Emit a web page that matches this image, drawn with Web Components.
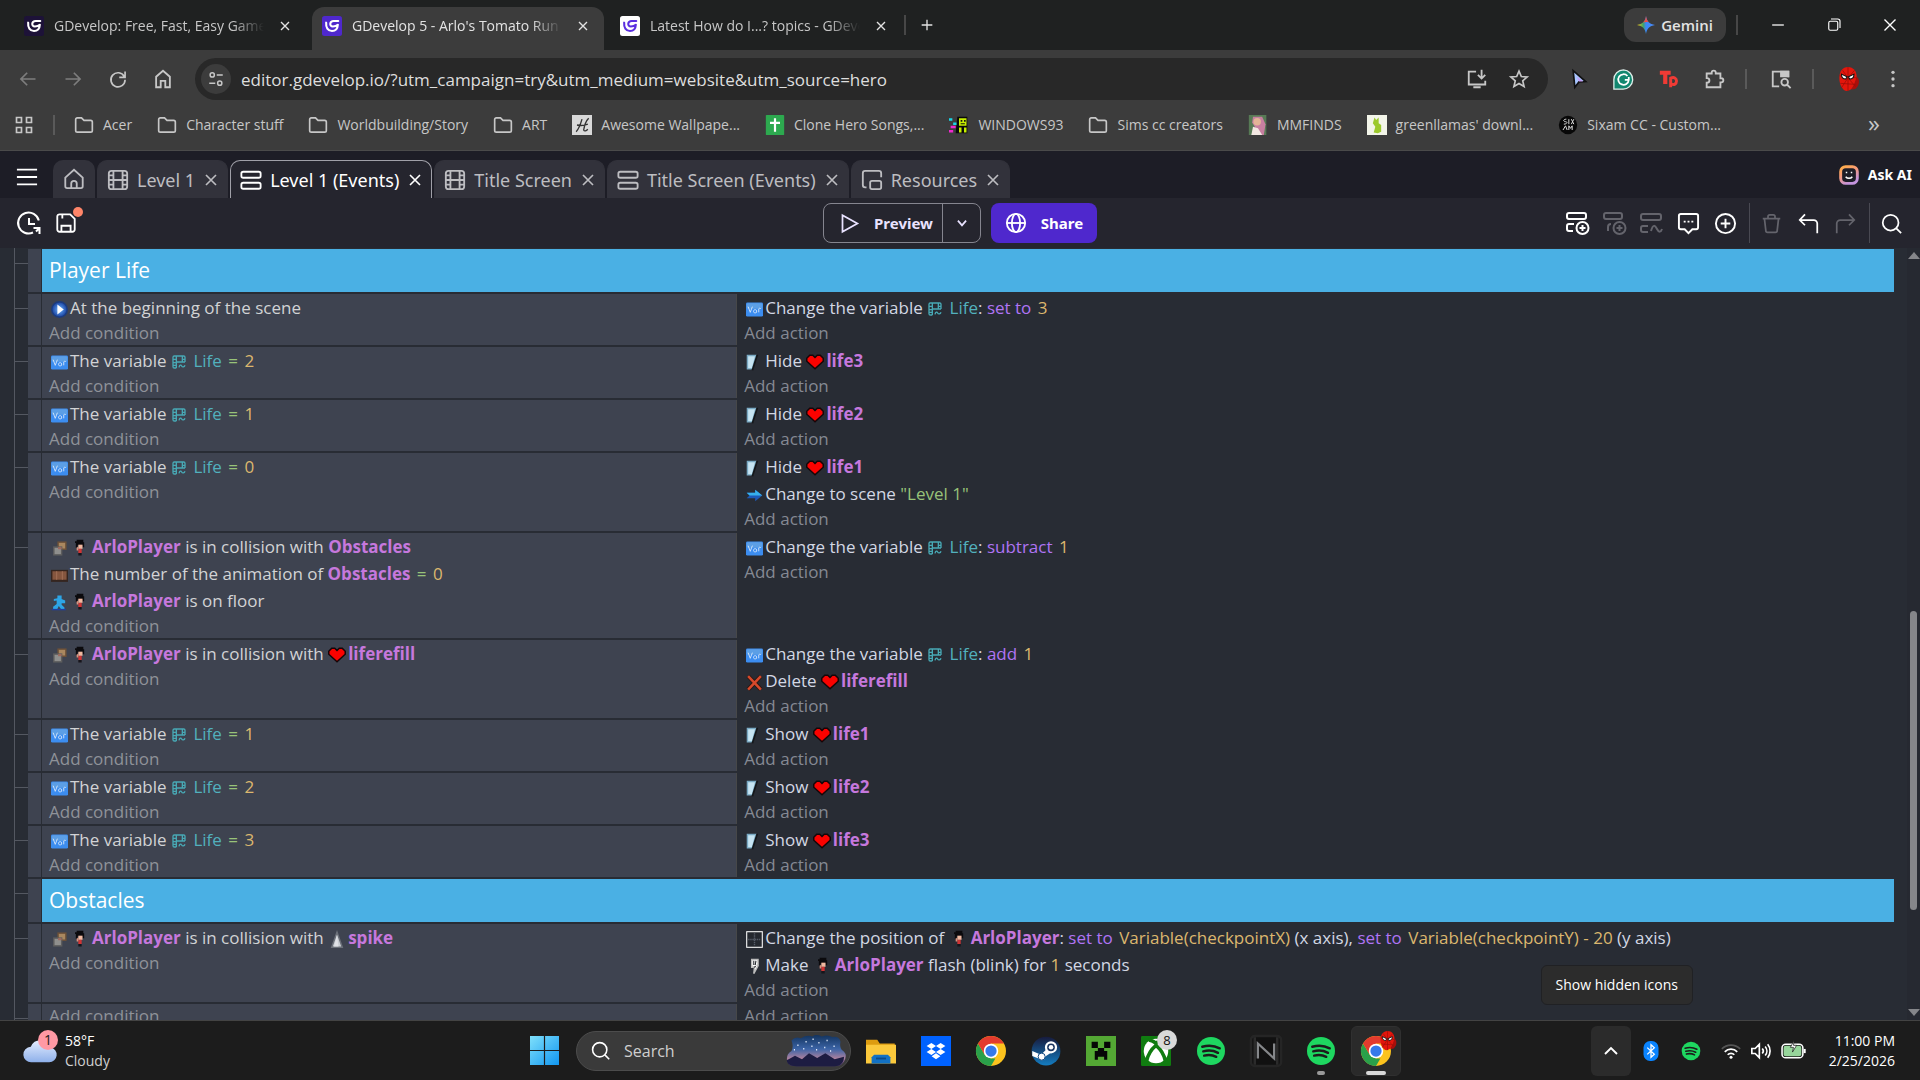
<!DOCTYPE html>
<html lang="en">
<head>
<meta charset="utf-8">
<title>GDevelop 5 - Arlo's Tomato Run</title>
<style>
  html, body {
    margin: 0;
    height: 100%;
  }
  body {
    display: flex;
    flex-direction: column;
    height: 100vh;
    overflow: hidden;
    background: #282c34;
    font-family: "Open Sans", "Noto Sans", sans-serif;
  }
</style>
</head>
<body>

<browser-tabs>
  <browser-tab icon="gd-dark">GDevelop: Free, Fast, Easy Game Engine</browser-tab>
  <browser-tab icon="gd-purple" active>GDevelop 5 - Arlo's Tomato Run</browser-tab>
  <browser-tab icon="gd-white">Latest How do I...? topics - GDevelop</browser-tab>
</browser-tabs>

<browser-toolbar></browser-toolbar>

<bookmark-bar>
  <bookmark-link icon="folder">Acer</bookmark-link>
  <bookmark-link icon="folder">Character stuff</bookmark-link>
  <bookmark-link icon="folder">Worldbuilding/Story</bookmark-link>
  <bookmark-link icon="folder">ART</bookmark-link>
  <bookmark-link icon="wallpaper">Awesome Wallpape...</bookmark-link>
  <bookmark-link icon="sheet">Clone Hero Songs,...</bookmark-link>
  <bookmark-link icon="win93">WINDOWS93</bookmark-link>
  <bookmark-link icon="folder">Sims cc creators</bookmark-link>
  <bookmark-link icon="mmfinds">MMFINDS</bookmark-link>
  <bookmark-link icon="llama">greenllamas' downl...</bookmark-link>
  <bookmark-link icon="sixam">Sixam CC - Custom...</bookmark-link>
</bookmark-bar>

<editor-tabs>
  <editor-tab icon="film">Level 1</editor-tab>
  <editor-tab icon="events" active>Level 1 (Events)</editor-tab>
  <editor-tab icon="film">Title Screen</editor-tab>
  <editor-tab icon="events">Title Screen (Events)</editor-tab>
  <editor-tab icon="resources">Resources</editor-tab>
</editor-tabs>

<editor-toolbar></editor-toolbar>

<event-sheet>
  <event-group>Player Life</event-group>

  <event-row>
    <event-line slot="conditions" icon="start">At the beginning of the scene</event-line>
    <event-line slot="actions" icon="var">Change the variable <ui-icon name="scenevar" size="16"></ui-icon> <var>Life</var>: <em>set to</em> <i>3</i></event-line>
  </event-row>

  <event-row>
    <event-line slot="conditions" icon="var">The variable <ui-icon name="scenevar" size="16"></ui-icon> <var>Life</var> <s>=</s> <i>2</i></event-line>
    <event-line slot="actions" icon="visible">Hide <ui-icon name="heart" size="18"></ui-icon><b>life3</b></event-line>
  </event-row>

  <event-row>
    <event-line slot="conditions" icon="var">The variable <ui-icon name="scenevar" size="16"></ui-icon> <var>Life</var> <s>=</s> <i>1</i></event-line>
    <event-line slot="actions" icon="visible">Hide <ui-icon name="heart" size="18"></ui-icon><b>life2</b></event-line>
  </event-row>

  <event-row>
    <event-line slot="conditions" icon="var">The variable <ui-icon name="scenevar" size="16"></ui-icon> <var>Life</var> <s>=</s> <i>0</i></event-line>
    <event-line slot="actions" icon="visible">Hide <ui-icon name="heart" size="18"></ui-icon><b>life1</b></event-line>
    <event-line slot="actions" icon="scene">Change to scene <q>"Level 1"</q></event-line>
  </event-row>

  <event-row>
    <event-line slot="conditions" icon="collision"><ui-icon name="player" size="20"></ui-icon><b>ArloPlayer</b> is in collision with <b>Obstacles</b></event-line>
    <event-line slot="conditions" icon="animation">The number of the animation of <b>Obstacles</b> <s>=</s> <i>0</i></event-line>
    <event-line slot="conditions" icon="floor"><ui-icon name="player" size="20"></ui-icon><b>ArloPlayer</b> is on floor</event-line>
    <event-line slot="actions" icon="var">Change the variable <ui-icon name="scenevar" size="16"></ui-icon> <var>Life</var>: <em>subtract</em> <i>1</i></event-line>
  </event-row>

  <event-row>
    <event-line slot="conditions" icon="collision"><ui-icon name="player" size="20"></ui-icon><b>ArloPlayer</b> is in collision with <ui-icon name="heart" size="18"></ui-icon><b>liferefill</b></event-line>
    <event-line slot="actions" icon="var">Change the variable <ui-icon name="scenevar" size="16"></ui-icon> <var>Life</var>: <em>add</em> <i>1</i></event-line>
    <event-line slot="actions" icon="delete">Delete <ui-icon name="heart" size="18"></ui-icon><b>liferefill</b></event-line>
  </event-row>

  <event-row>
    <event-line slot="conditions" icon="var">The variable <ui-icon name="scenevar" size="16"></ui-icon> <var>Life</var> <s>=</s> <i>1</i></event-line>
    <event-line slot="actions" icon="visible">Show <ui-icon name="heart" size="18"></ui-icon><b>life1</b></event-line>
  </event-row>

  <event-row>
    <event-line slot="conditions" icon="var">The variable <ui-icon name="scenevar" size="16"></ui-icon> <var>Life</var> <s>=</s> <i>2</i></event-line>
    <event-line slot="actions" icon="visible">Show <ui-icon name="heart" size="18"></ui-icon><b>life2</b></event-line>
  </event-row>

  <event-row>
    <event-line slot="conditions" icon="var">The variable <ui-icon name="scenevar" size="16"></ui-icon> <var>Life</var> <s>=</s> <i>3</i></event-line>
    <event-line slot="actions" icon="visible">Show <ui-icon name="heart" size="18"></ui-icon><b>life3</b></event-line>
  </event-row>

  <event-group>Obstacles</event-group>

  <event-row>
    <event-line slot="conditions" icon="collision"><ui-icon name="player" size="20"></ui-icon><b>ArloPlayer</b> is in collision with <ui-icon name="spike" size="18"></ui-icon><b>spike</b></event-line>
    <event-line slot="actions" icon="position">Change the position of <ui-icon name="player" size="20"></ui-icon><b>ArloPlayer</b>: <em>set to</em> <i>Variable(checkpointX)</i> (x axis), <em>set to</em> <i>Variable(checkpointY) - 20</i> (y axis)</event-line>
    <event-line slot="actions" icon="flash">Make <ui-icon name="player" size="20"></ui-icon><b>ArloPlayer</b> flash (blink) for <i>1</i> seconds</event-line>
  </event-row>

  <event-row></event-row>
</event-sheet>

<task-bar></task-bar>

<script>
  const RED_HEAD = `
    <path d="M12 1c5 0 8 4 8 9 0 6-4 13-9 13-4 0-7-6-7-12 0-6 3-10 8-10z" fill="#e3160c" stroke="none"/>
    <path d="M20 10c3 2 3 8-1 11l-4 1 3-6z" fill="#a80f0b" stroke="none"/>
    <path d="M12 1v22M4 9l16 2M5 16l14 1M7 4l5 7 6-7M6 20l6-9 7 8" stroke="#9a0d08" stroke-width=".7"/>
    <path d="M6 7.5l5 2.500-1 2c-2.500 0-4-1.500-4-4.500zM17.500 7.500l-5 2.500 1 2c2.500 0 4-1.500 4-4.500z" fill="#fff" stroke="#111" stroke-width="1"/>`;

  const CHROME = `
    <circle cx="12" cy="12" r="12" fill="#fcc31e"/>
    <path d="M1.600 6 7 15l5 3h3.500L12 24A12 12 0 0 1 1.600 6z" fill="#2aa04a"/>
    <path d="M1.600 6A12 12 0 0 1 22.400 6H12L7 15z" fill="#e33b2e"/>
    <circle cx="12" cy="12" r="5.800" fill="#fff"/>
    <circle cx="12" cy="12" r="4.500" fill="#3579ea"/>`;

  // GDevelop "G" mark, shared by the three favicons
  const gdMark = (bg, fg) => `
    <rect width="24" height="24" rx="3" fill="${bg}" stroke="none"/>
    <path d="M19.500 6H14c-5 0-5.500 6.500-1 6.500 2.500 0 4.500-.5 6-2-.3 5-3 7.500-7 7.500-5 0-7.500-4-7-10" stroke="${fg}" stroke-width="2.500" stroke-linecap="round" stroke-linejoin="round"/>`;

  const ICONS = {
    "gd-dark": gdMark("#1d1238", "#fff"),
    "gd-purple": gdMark("#4f28cd", "#fff"),
    "gd-white": gdMark("#fff", "#5a2ee0"),
    close: `<path d="M6 6l12 12M18 6 6 18"/>`,
    plus: `<path d="M12 4v16M4 12h16"/>`,
    minimize: `<path d="M5 12h14"/>`,
    restore: `<rect x="5" y="7" width="12" height="12" rx="2"/><path d="M8 4h9a3 3 0 0 1 3 3v9"/>`,
    gemini: `<defs><linearGradient id="g" x1="0" y1=".5" x2="1" y2=".5"><stop offset="0" stop-color="#f8c414"/><stop offset=".35" stop-color="#3fa368"/><stop offset=".5" stop-color="#3b86f6"/><stop offset="1" stop-color="#4b8cf8"/></linearGradient></defs>
      <path d="M12 0c1 7 5 11 12 12-7 1-11 5-12 12C11 17 7 13 0 12 7 11 11 7 12 0z" fill="url(#g)" stroke="none"/><path d="M12 0c1 5 2 7 4 8.500-3-1-5-.5-8 0 2.500-2 3.500-4 4-8.500z" fill="#ea4b45" stroke="none"/>`,
    back: `<path d="M21 12H4M11 4.500 3.500 12l7.500 7.500"/>`,
    forward: `<path d="M3 12h17M13 4.500l7.500 7.500-7.500 7.500"/>`,
    reload: `<path d="M19.500 9A8.500 8.500 0 1 0 20.500 13M20.500 3v7h-7"/>`,
    chromehome: `<path d="M4.500 21V9.500L12 3l7.500 6.500V21h-5v-7h-5v7z"/>`,
    tune: `<circle cx="7" cy="6.500" r="2.800"/><path d="M13 6.500h8M3 17.500h8"/><circle cx="17" cy="17.500" r="2.800"/>`,
    install: `<path d="M11 4H3v14h18v-4M8 21h8M17 2v9M13 7.500l4 4 4-4"/>`,
    star: `<path d="M12 2.500l2.800 6.500 7 .6-5.300 4.600 1.600 6.900L12 17.500l-6.100 3.600 1.600-6.900L2.200 9.600l7-.6z"/>`,
    cursor: `<path d="M5 2l15 13-8 .5L7 22z" fill="#a9c7ff" stroke="#111" stroke-width="2"/><path d="M9 9l8 6h-5z" fill="#c79cf5" stroke="none"/>`,
    grammarly: `<path d="M12 1a11 11 0 1 1-1 22H1V12A11 11 0 0 1 12 1z" fill="#12876f" stroke="#dfeeea" stroke-width="1.500"/><path d="M16.500 8A6 6 0 1 0 18 12.500h-4.500M18 9v3.500" stroke="#fff" stroke-width="2"/>`,
    tp: `<path d="M1 2h13v5h-4v11H5V7H1z" fill="#f03b35" stroke="none"/><path d="M14 22V11c4-2 7 0 7 3.500s-3 5-6 3.500" stroke="#f03b35" stroke-width="3.500"/>`,
    puzzle: `<path d="M4 6h5.500V5a2.200 2.200 0 0 1 4.400 0v1H19v5.200h1a2.200 2.200 0 0 1 0 4.400h-1V21H4v-5c4 0 4-5 0-5z"/>`,
    lens: `<path d="M10 20H3V4h17v6"/><path d="M12 4h8v5h-8z" fill="currentColor"/><circle cx="16" cy="15.500" r="3.600"/><path d="M18.500 18l4 4"/>`,
    avatar: RED_HEAD,
    dots: `<g fill="currentColor" stroke="none"><circle cx="12" cy="4" r="2"/><circle cx="12" cy="12" r="2"/><circle cx="12" cy="20" r="2"/></g>`,
    apps: `<path d="M3 3h6v6H3zM15 3h6v6h-6zM3 15h6v6H3zM15 15h6v6h-6z"/>`,
    folder: `<path d="M2 5.500A2 2 0 0 1 4 3.500h5l3 3h8a2 2 0 0 1 2 2v10a2 2 0 0 1-2 2H4a2 2 0 0 1-2-2z"/>`,
    wallpaper: `<rect width="24" height="24" fill="#d9d9d9" stroke="none"/><path d="M5 20c3-3 5-8 7-15M20 4c-3 3-5 8-6 14 1 2 3 1 5-1M6 12c4 1 8 1 13-1" stroke="#333" stroke-width="1.600"/>`,
    sheet: `<rect x="1" width="22" height="24" rx="1" fill="#2da94f" stroke="none"/><path d="M12 4v16M6 9.500h12" stroke="#fff" stroke-width="2.600"/>`,
    win93: `<g stroke="none"><path d="M10 2h12v20H8z" fill="#0a0a0a"/><path d="M12 4h9v9h-9zM12 15h3v6h-3zM18 15h3v6h-3z" fill="#c8f000"/><path d="M14 6h2v2h-2zM18 6h2v2h-2zM14 10h5v1h-5z" fill="#111"/><path d="M0 4h4v3H0zM5 9h4v3H5z" fill="#19d7e8"/><path d="M2 13h6v3H2zM0 18h5v3H0z" fill="#ef28cf"/></g>`,
    mmfinds: `<g stroke="none"><path d="M1 0h21v24H1z" fill="#577a55"/><path d="M6 2h11l4 9-2 13h-5L5 9z" fill="#c77fa0"/><circle cx="11" cy="8" r="4.500" fill="#e3b497"/><path d="M4 24l2-10 6 2 5 8z" fill="#f3e8e2"/></g>`,
    llama: `<path d="M0 0h24v24H0z" fill="#f3f5e9" stroke="none"/><path d="M9 3l2 3 3-3v7l3 2v8l-4 2-5-1 2-7-3-4z" fill="#9cc92c" stroke="none"/>`,
    sixam: `<circle cx="12" cy="12" r="11" fill="#080808" stroke="none"/><path d="M10 5c-4 0-4 3-1 3s2 3-2 3M13 5v6M16 5l3 6M19 5l-3 6M6 18l3-5 2 5M13 18v-5l2 3 2-3v5" stroke="#d8d8d8" stroke-width="1.200"/>`,
    menu: `<path d="M1 4h22M1 12h22M1 20h22"/>`,
    home: `<path d="M2.500 10.500 12 2l9.500 8.500V20a2 2 0 0 1-2 2h-15a2 2 0 0 1-2-2z"/><path d="M9 22v-5a3 3 0 0 1 6 0v5"/>`,
    film: `<rect x="2" y="2" width="20" height="20" rx="3"/><path d="M7 2v20M17 2v20M7 12h10M2 7h5M2 12h5M2 17h5M17 7h5M17 12h5M17 17h5"/>`,
    events: `<rect x="1.500" y="3" width="21" height="6.500" rx="2"/><rect x="1.500" y="15" width="21" height="6.500" rx="2"/>`,
    resources: `<path d="M6 20H4.500A2.500 2.500 0 0 1 2 17.500v-13A2.500 2.500 0 0 1 4.500 2h15A2.500 2.500 0 0 1 22 4.500V9"/><rect x="10" y="13" width="12" height="9" rx="2"/>`,
    askai: `<defs><linearGradient id="a" x1="0" y1="0" x2=".5" y2="1"><stop offset="0" stop-color="#ffae46"/><stop offset=".45" stop-color="#f79a78"/><stop offset="1" stop-color="#c393dd"/></linearGradient></defs>
      <rect x="2" y="2" width="20" height="20" rx="6" stroke="url(#a)" stroke-width="3.500"/><path d="M9 8v2M15 8v2M8 14c2 2.500 6 2.500 8 0" stroke="#fff" stroke-width="1.800"/>`,
    history: `<path d="M21.800 9.500A10.500 10.500 0 1 0 16 21.500M12 7v6h6M22.500 23v-6h-6M22 17.500l-3 3"/>`,
    save: `<path d="M2.500 5A2.500 2.500 0 0 1 5 2.500h11.500l5 5V19a2.500 2.500 0 0 1-2.500 2.500H5A2.500 2.500 0 0 1 2.500 19zM8 3v4M7 21v-6h10v6"/>`,
    play: `<path d="M4 2.500 21 12 4 21.500z"/>`,
    chevdown: `<path d="M5 8l7 8 7-8"/>`,
    chevup: `<path d="M4 16l8-8 8 8"/>`,
    globe: `<circle cx="12" cy="12" r="10"/><ellipse cx="12" cy="12" rx="4.500" ry="10"/><path d="M2 12h20"/>`,
    addevent: `<rect x="1" y="2" width="19" height="6" rx="2"/><path d="M8 13H3a2 2 0 0 0-2 2v3a2 2 0 0 0 2 2h4"/><circle cx="16.500" cy="17" r="6"/><path d="M16.500 14v6M13.500 17h6"/>`,
    addsub: `<rect x="1" y="2" width="18" height="6" rx="2"/><path d="M8 13a3 3 0 0 0-3 3v4"/><circle cx="16.500" cy="17" r="6"/><path d="M16.500 14v6M13.500 17h6"/>`,
    addother: `<rect x="1" y="3" width="20" height="6" rx="2"/><path d="M8 15H3a2 2 0 0 0-2 2v2a2 2 0 0 0 2 2h5M11 20c2-7 4-6 6-2s4 3 5 0"/>`,
    comment: `<path d="M4 2h16a2 2 0 0 1 2 2v12a2 2 0 0 1-2 2h-4l-4 4-4-4H4a2 2 0 0 1-2-2V4a2 2 0 0 1 2-2z"/><path d="M7 10h2M11 10h2M15 10h2"/>`,
    addcircle: `<circle cx="12" cy="12" r="10"/><path d="M12 7v10M7 12h10"/>`,
    trash: `<path d="M2 6.500h20M8 6V4a2 2 0 0 1 2-2h4a2 2 0 0 1 2 2v2M4 7l1.500 13a2 2 0 0 0 2 2h9a2 2 0 0 0 2-2L20 7"/>`,
    undo: `<path d="M8 1.500 2 8l6 6M2 8h16a4 4 0 0 1 4 4v11"/>`,
    redo: `<path d="M16 1.500 22 8l-6 6M22 8H6a4 4 0 0 0-4 4v11"/>`,
    search: `<circle cx="11" cy="11" r="9"/><path d="M17.500 17.500 23 23"/>`,

    start: `<defs><radialGradient id="s"><stop offset="0" stop-color="#6db4ff"/><stop offset="1" stop-color="#163d9b"/></radialGradient></defs><circle cx="12" cy="12" r="11" fill="url(#s)" stroke="#1c3b7d"/><path d="M9 5l9 7-9 7z" fill="#fff" stroke="none"/>`,
    var: `<rect y="2" width="24" height="20" rx="2" fill="#3c8df0" stroke="none"/><rect x="1" y="3" width="22" height="8" rx="2" fill="#5c9fe6" stroke="none"/><path d="M3 8l3 8 3-8M11 16c-2-4 4-5 4-2v2c-1 1-3 1-4 0M18 16v-5c1-1 2-1 3 0" stroke="#d4e6fb" stroke-width="1.300"/>`,
    scenevar: `<path d="M8 21H5a2 2 0 0 1-2-2V5a2 2 0 0 1 2-2h14a2 2 0 0 1 2 2v7M8 3v18M17 3v9M8 12h13M3 8h5M3 13h5M3 17h5M17 8h4M12 20c1-4 3-4 4-2s4 2 5-1" stroke="#48a9b5" stroke-width="2"/>`,
    visible: `<path d="M2 2h12L9 21H2z" fill="#c6e4f2" stroke="#7aaac4"/><path d="M16 1 9 23" stroke="#141619" stroke-width="2.500"/>`,
    heart: `<path d="M12 21 1 11V7l4-4h4l3 3 3-3h4l4 4v4z" fill="#fb0200" stroke="#150608" stroke-width="2"/>`,
    scene: `<path d="M1 8h12V4l10 8-10 8v-4H1l4-4z" fill="#1d5ab8" stroke="none"/><path d="M1 8h12V4l10 8H5z" fill="#36b0ec" stroke="none"/>`,
    collision: `<rect x="10" y="3" width="11" height="10" fill="#a9875f" stroke="#6d5138"/><rect x="4" y="10" width="11" height="11" fill="#8f8f8d" stroke="#5d5d5d"/><path d="M10 10h5v3h-5z" fill="#9e6a5e" stroke="none"/>`,
    player: `<g stroke="none"><path d="M8 2h8v3h1v6h-2V9H9v3H7V6H6V4h2z" fill="#0b0a0d"/><path d="M10 8h5v5h-5z" fill="#f0b9a0"/><path d="M10 13h4v5h-4z" fill="#d03434"/><path d="M10 18h4v3h-4z" fill="#17151b"/><path d="M8 11h2v4H8z" fill="#d9937f"/></g>`,
    animation: `<path d="M0 4h24v17H0z" fill="#35251f" stroke="none"/><path d="M2 6h20v12H2z" fill="#85563f" stroke="none"/><path d="M8 6v12M16 6v12" stroke="#a06e55" stroke-width="1.500"/>`,
    floor: `<path d="M9 2h6v5l5 2v4h-5v2l4 4v2h-5l-3-4-2 4H3v-3l5-4V9L4 10V7l5-1z" fill="#2da5e6" stroke="none"/><path d="M1 22h20" stroke="#1f3f9e" stroke-width="2"/>`,
    delete: `<path d="M3 3l18 19M21 3 3 22" stroke="#2c1713" stroke-width="6"/><path d="M3 3l18 19M21 3 3 22" stroke="#d6492b" stroke-width="3.500"/>`,
    spike: `<path d="M12 3l7 20H5z" fill="#c8ccd2" stroke="#6b7079"/><path d="M12 7l2 15H8z" fill="#dfe1e6" stroke="none"/>`,
    position: `<rect x="1" y="1" width="22" height="22" fill="#24282f" stroke="#fff" stroke-width="1.500"/><path d="M12 3v18M3 12h18" stroke="#565c68" stroke-dasharray="2 1"/>`,
    flash: `<path d="M8 2h9v8h-2l2 1-6 11 1-9H8z" fill="#fff" stroke="#bcbcbc"/><path d="M11 4v6M13 10l1-6M11 13l3-1" stroke="#23262c" stroke-width="1.500"/>`,

    weather: `<defs><linearGradient id="w" x1="0" y1="0" x2="0" y2="1"><stop offset="0" stop-color="#e4edff"/><stop offset="1" stop-color="#8eb0ea"/></linearGradient></defs><path d="M6 20a5.500 5.500 0 0 1-.5-11A7.500 7.500 0 0 1 19.500 9.500 5.300 5.300 0 0 1 18.500 20z" fill="url(#w)" stroke="none"/>`,
    windows: `<defs><linearGradient id="n" x1="0" y1="0" x2="1" y2="1"><stop offset="0" stop-color="#7fe0fb"/><stop offset="1" stop-color="#1196f0"/></linearGradient></defs><path d="M0 0h11.500v11.500H0zM12.500 0H24v11.500H12.500zM0 12.500h11.500V24H0zM12.500 12.500H24V24H12.500z" fill="url(#n)" stroke="none"/>`,
    explorer: `<path d="M0 3h9l2 3h12v6H0z" fill="#dd9c10" stroke="none"/><path d="M0 7h24v15H0z" fill="#fbc93c" stroke="none"/><path d="M4.500 22v-5l2-2h11l2 2v5z" fill="#1271c4" stroke="none"/><path d="M8 18h8" stroke="#0b4a8a" stroke-width="1.500"/>`,
    dropbox: `<path d="M0 0h24v24H0z" fill="#0062ff" stroke="none"/><path d="M8.300 5.500 12 8 8.300 10.400 4.500 8zM15.700 5.500 19.500 8l-3.800 2.400L12 8zM8.300 10.400 12 12.800l-3.700 2.400-3.800-2.400zM15.700 10.400l3.800 2.400-3.800 2.400-3.700-2.400zM12 13.800l3.500 2.300L12 18.500l-3.500-2.400z" fill="#fff" stroke="none"/>`,
    chrome: `<g stroke="none">${CHROME}</g>`,
    steam: `<defs><linearGradient id="t" x1="0" y1="0" x2="0" y2="1"><stop offset="0" stop-color="#171a3c"/><stop offset="1" stop-color="#147cc0"/></linearGradient></defs><circle cx="12" cy="12" r="11.500" fill="url(#t)" stroke="none"/><path d="M1 12l7 3 4-4 1-3 5 4-6 4-3 3-3-1-5-2z" fill="#fff" stroke="none"/><circle cx="16" cy="9" r="4" fill="#1a3560" stroke="#fff" stroke-width="1.800"/><circle cx="16" cy="9" r="1.800" fill="#fff" stroke="none"/><circle cx="8.500" cy="16.500" r="2.800" fill="#fff" stroke="#1a4f86" stroke-width=".8"/>`,
    minecraft: `<path d="M0 0h24v24H0z" fill="#54a834" stroke="none"/><path d="M4.500 4.500h5v5h-5zM14.500 4.500h5v5h-5zM9.500 9.500h5v2.500h2.500v7h-2.500v-2.500h-5V19H7v-7h2.500z" fill="#060606" stroke="none"/>`,
    xbox: `<rect width="24" height="24" rx="1" fill="#107c10" stroke="none"/><circle cx="12" cy="12" r="9.800" fill="#fff" stroke="none"/><path d="M6 3.500c2-.5 4 .8 6 2.300 2-1.500 4-2.800 6-2.300M4.500 20C5.500 15 9 10 12 7.500 15 10 18.500 15 19.500 20" stroke="#107c10" stroke-width="2.800"/>`,
    spotify: `<circle cx="12" cy="12" r="11.200" fill="#1ed760" stroke="none"/>
      <path d="M5 8.600c5-1.400 9.800-1 14 1.300M5.800 12.300c4.300-1.200 8.200-.8 11.800 1.200M6.500 15.700c3.500-.9 6.800-.6 9.700 1" stroke="#1c1c1c" stroke-width="1.900" stroke-linecap="round"/>`,
    nox: `<rect width="24" height="24" rx="3" fill="#111" stroke="#252525"/><path d="M3 1v22M21 1v22" stroke="#2b2b2b" stroke-width="2"/><path d="M5.500 18V6l13 12V6" stroke="#85878a" stroke-width="1.800"/>`,
    bluetooth: `<rect x="3" width="18" height="24" rx="8" fill="#0a84ff" stroke="none"/><path d="M7.500 8l8.500 8-4 3.500v-15L16 8l-8.500 8" stroke="#fff" stroke-width="1.500"/>`,
    wifi: `<path d="M1 9.500a15.500 15.500 0 0 1 22 0" stroke="#555"/><path d="M4.500 13a10.500 10.500 0 0 1 15 0M8 16.500a5.500 5.500 0 0 1 8 0"/><circle cx="12" cy="19.500" r="1.800" fill="currentColor" stroke="none"/>`,
    volume: `<path d="M1 9v6h4l5 5V4L5 9zM13.500 9a4.500 4.500 0 0 1 0 6M17 6.500a8.500 8.500 0 0 1 0 11M20 4a12.500 12.500 0 0 1 0 16"/>`,
    battery: `<rect x="1" y="6" width="20" height="13" rx="3.500" stroke="#fff" stroke-width="1.500"/><rect x="2.500" y="7.500" width="17" height="10" rx="2" fill="#97d69b" stroke="none"/><path d="M22.700 10.500v4" stroke="#fff" stroke-width="2"/><path d="M12.500 2.500 9 9h3l-1 4.500 4-6.500h-3z" fill="#fff" stroke="#1c1c1c" stroke-width=".7"/>`,
    night: `<defs><linearGradient id="i" x1="0" y1="0" x2="0" y2="1"><stop offset="0" stop-color="#12335e"/><stop offset=".45" stop-color="#3c64a6"/><stop offset=".75" stop-color="#a9809e"/><stop offset="1" stop-color="#3a2b62"/></linearGradient></defs>
      <path d="M-9 3q3-4 8-2 5-3 10-1.500Q12-3 17-.5q5-2 9 .5 6-1 7 4-1 4 1 7 5 3 3 8-2 6-9 6H-5q-8 0-8-6 0-5 4-7 2-4 0-9z" fill="url(#i)" stroke="none"/>
      <path d="M-13 20l7-4 6 3 6-5 7 4 7-4 8 5 8-2c0 5-3 8-8 8H-5c-5 0-8-2-8-5z" fill="#1d1c42" stroke="none"/>
      <path d="M-4 7h1M3 4h1M9 2h1M14 5h1M21 3h1M27 8h1M1 10h1M8 8h1M19 9h1M-7 11h1M24 12h1M12 11h1" stroke="#e8f1ff" stroke-width="1.300"/>`
  };

  const define = (name, html, setup) => {
    const template = document.createElement("template");
    template.innerHTML = html;
    customElements.define(name, class extends HTMLElement {
      constructor() {
        super();
        this.attachShadow({ mode: "open" });
        this.shadowRoot.appendChild(template.content.cloneNode(true));
      }
      connectedCallback() {
        if (setup) setup(this, this.shadowRoot);
      }
    });
  };

  // <ui-icon name size stroke>, drawn on a 24 unit grid
  define("ui-icon", `
    <style>
      :host { display: inline-flex; flex: none; }
      svg { display: block; overflow: visible; }
    </style>
    <svg viewBox="0 0 24 24" fill="none" stroke="currentColor" aria-hidden="true"></svg>
  `, (el, root) => {
    const svg = root.querySelector("svg");
    const size = el.getAttribute("size") || 20;
    svg.setAttribute("width", size);
    svg.setAttribute("height", size);
    svg.setAttribute("stroke-width", el.getAttribute("stroke") || 2);
    svg.innerHTML = ICONS[el.getAttribute("name")] || "";
  });

  // passes the host's icon attribute on to its first ui-icon
  const setIcon = (el, root) => {
    const icon = root.querySelector("ui-icon");
    icon.setAttribute("name", el.getAttribute("icon"));
    icon.connectedCallback();
  };

  const BUTTON_RESET = `
    * { box-sizing: border-box; }
    button { display: inline-flex; align-items: center; justify-content: center; margin: 0; padding: 0;
      border: 0; background: none; color: inherit; font: inherit; }
  `;

  define("browser-tab", `
    <style>
      ${BUTTON_RESET}
      :host { display: flex; align-items: center; gap: 10px; box-sizing: border-box; width: 292px; height: 43px;
        padding: 0 10px 6px; font-size: 14px; color: #c7c7c7; }
      :host([active]) { background: #3c3c3c; border-radius: 12px 12px 0 0; color: #e3e3e3; }
      .title { flex: 1; overflow: hidden; white-space: nowrap;
        -webkit-mask-image: linear-gradient(90deg, #000 85%, transparent); mask-image: linear-gradient(90deg, #000 85%, transparent); }
      button { width: 22px; height: 22px; color: #e3e3e3; }
    </style>
    <ui-icon size="20"></ui-icon>
    <span class="title"><slot></slot></span>
    <button aria-label="Close tab"><ui-icon name="close" size="16"></ui-icon></button>
  `, setIcon);

  define("browser-tabs", `
    <style>
      ${BUTTON_RESET}
      :host { display: flex; align-items: flex-end; flex: none; height: 50px; box-sizing: border-box;
        padding: 0 2px 0 14px; gap: 6px; background: #1f2121; color: #e3e3e3; }
      .sep { width: 2px; height: 20px; background: #474747; }
      .add, .win { height: 34px; }
      .tools, .window { display: flex; align-items: center; height: 43px; padding-bottom: 7px; }
      .tools { gap: 10px; margin-left: -4px; }
      .add { width: 22px; }
      .window { margin-left: auto; }
      .gemini { height: 34px; width: 102px; gap: 6px; margin-right: 10px; border-radius: 12px; background: #3c3c3c;
        font-size: 15px; font-weight: 600; }
      .win { width: 56px; color: #fff; }
      .win.first { margin-left: 12px; }
    </style>
    <slot></slot>
    <div class="tools"><div class="sep"></div><button class="add" aria-label="New tab"><ui-icon name="plus" size="16"></ui-icon></button></div>
    <div class="window">
      <button class="gemini"><ui-icon name="gemini" size="18"></ui-icon>Gemini</button>
      <div class="sep"></div>
      <button class="win first" aria-label="Minimize"><ui-icon name="minimize" size="20" stroke="1.5"></ui-icon></button>
      <button class="win" aria-label="Restore"><ui-icon name="restore" size="18" stroke="1.5"></ui-icon></button>
      <button class="win" aria-label="Close"><ui-icon name="close" size="22" stroke="1.5"></ui-icon></button>
    </div>
  `);

  define("browser-toolbar", `
    <style>
      ${BUTTON_RESET}
      :host { display: flex; align-items: center; flex: none; height: 58px; box-sizing: border-box; padding: 0 5px;
        background: #3c3c3c; color: #c7c7c7; }
      button { width: 45px; height: 36px; }
      .dim { color: #7d7d7d; }
      .address { display: flex; align-items: center; flex: 1; height: 42px; margin: 0 8px 0 10px; padding: 0 8px 0 6px;
        border-radius: 21px; background: #282828; }
      .site { width: 30px; height: 30px; border-radius: 15px; background: #3c3c3c; }
      .address .act { width: 42px; }
      input { flex: 1; min-width: 0; margin: 0; padding: 0 0 0 10px; border: 0; outline: 0; background: none; color: #dedede;
        font: 17px "Open Sans", sans-serif; }
      .sep { width: 2px; height: 20px; margin: 0 11px 0 9px; background: #5a5a5a; }
    </style>
    <button class="dim" aria-label="Back"><ui-icon name="back"></ui-icon></button>
    <button class="dim" aria-label="Forward"><ui-icon name="forward"></ui-icon></button>
    <button aria-label="Reload"><ui-icon name="reload"></ui-icon></button>
    <button aria-label="Home"><ui-icon name="chromehome" size="22"></ui-icon></button>
    <div class="address">
      <button class="site" aria-label="Site information"><ui-icon name="tune" size="18"></ui-icon></button>
      <input aria-label="Address" value="editor.gdevelop.io/?utm_campaign=try&amp;utm_medium=website&amp;utm_source=hero">
      <button class="act" aria-label="Install"><ui-icon name="install" size="22"></ui-icon></button>
      <button class="act" aria-label="Bookmark"><ui-icon name="star"></ui-icon></button>
    </div>
    <button aria-label="Cursor"><ui-icon name="cursor"></ui-icon></button>
    <button aria-label="Grammarly"><ui-icon name="grammarly" size="21"></ui-icon></button>
    <button aria-label="Toolkit"><ui-icon name="tp"></ui-icon></button>
    <button aria-label="Extensions"><ui-icon name="puzzle" size="22"></ui-icon></button>
    <div class="sep"></div>
    <button aria-label="Lens"><ui-icon name="lens" size="22"></ui-icon></button>
    <div class="sep"></div>
    <button aria-label="Profile"><ui-icon name="avatar" size="26"></ui-icon></button>
    <button aria-label="Menu"><ui-icon name="dots"></ui-icon></button>
  `);

  define("bookmark-link", `
    <style>
      :host { display: block; }
      a { display: flex; align-items: center; gap: 9px; color: #c7c7c7; font-size: 14px; text-decoration: none; white-space: nowrap; }
    </style>
    <a href="#"><ui-icon size="20"></ui-icon><slot></slot></a>
  `, setIcon);

  define("bookmark-bar", `
    <style>
      ${BUTTON_RESET}
      :host { display: flex; align-items: center; flex: none; height: 43px; box-sizing: border-box; gap: 25px; padding: 0 40px 9px 14px;
        border-bottom: 1px solid #4a4a4a; background: #3c3c3c; color: #c7c7c7; }
      .sep { width: 2px; height: 20px; margin: 0 -6px; background: #5a5a5a; }
      .more { margin-left: auto; padding-bottom: 4px; font-size: 24px; line-height: 20px; }
    </style>
    <button aria-label="Apps"><ui-icon name="apps"></ui-icon></button>
    <div class="sep"></div>
    <slot></slot>
    <button class="more" aria-label="More bookmarks">»</button>
  `);

  define("editor-tab", `
    <style>
      ${BUTTON_RESET}
      :host { display: flex; align-items: center; box-sizing: border-box; height: 38px; gap: 6px; padding: 0 6px 0 9px;
        border: 1px solid #32323b; border-bottom: 0; border-radius: 10px 10px 0 0; background: #32323b; color: #bdbdc1;
        font: 18px "Noto Sans", sans-serif; white-space: nowrap; }
      :host([active]) { border-color: #a0a0a8; background: #25252e; color: #fff; }
      .name { gap: 8px; }
      .close { width: 20px; height: 20px; }
    </style>
    <button class="name"><ui-icon size="22"></ui-icon><slot></slot></button>
    <button class="close" aria-label="Close"><ui-icon name="close" size="20"></ui-icon></button>
  `, setIcon);

  define("editor-tabs", `
    <style>
      ${BUTTON_RESET}
      :host { display: flex; align-items: flex-end; flex: none; height: 47px; box-sizing: border-box; gap: 2px; padding: 0 8px 0 16px;
        background: #1d1d26; color: #fff; }
      .menu { width: 22px; height: 42px; margin-right: 13px; }
      .home { width: 42px; height: 38px; border-radius: 10px 10px 0 0; background: #32323b; color: #bdbdc1; }
      .ask { align-self: center; height: 24px; margin-left: auto; gap: 9px; font: bold 14px "Noto Sans", sans-serif; }
    </style>
    <button class="menu" aria-label="Menu"><ui-icon name="menu" size="22"></ui-icon></button>
    <button class="home" aria-label="Home"><ui-icon name="home" size="22"></ui-icon></button>
    <slot></slot>
    <button class="ask"><ui-icon name="askai"></ui-icon>Ask AI</button>
  `);

  define("editor-toolbar", `
    <style>
      ${BUTTON_RESET}
      :host { display: grid; grid-template-columns: 1fr auto 1fr; align-items: center; flex: none; height: 50px; padding: 0 10px;
        background: #25252e; color: #fff; font: bold 15px "Noto Sans", sans-serif; }
      .side { display: flex; align-items: center; }
      .side button { width: 37px; height: 40px; }
      .right { justify-content: flex-end; }
      .off { color: #64646c; }
      .sep { width: 1px; height: 40px; margin: 0 3px 0 5px; background: #494952; }
      .save { position: relative; }
      .save::after { content: ""; position: absolute; top: 4px; right: 1px; width: 10px; height: 10px; border-radius: 5px; background: #ff8569; }
      .main { display: flex; gap: 10px; }
      .split { display: flex; border: 1px solid #85858f; border-radius: 8px; color: #e9e2ff; }
      .split button { height: 38px; }
      .preview { width: 119px; gap: 14px; padding-left: 6px; border-right: 1px solid #85858f; }
      .pick { width: 37px; }
      .share { width: 106px; height: 40px; gap: 14px; border-radius: 8px; background: #4f28cd; }
    </style>
    <div class="side">
      <button aria-label="Version history"><ui-icon name="history" size="24"></ui-icon></button>
      <button class="save" aria-label="Save"><ui-icon name="save" size="22"></ui-icon></button>
    </div>
    <div class="main">
      <div class="split">
        <button class="preview"><ui-icon name="play" size="21"></ui-icon>Preview</button>
        <button class="pick" aria-label="Preview options"><ui-icon name="chevdown" size="14" stroke="3"></ui-icon></button>
      </div>
      <button class="share"><ui-icon name="globe" size="22"></ui-icon>Share</button>
    </div>
    <div class="side right">
      <button aria-label="Add event"><ui-icon name="addevent" size="24"></ui-icon></button>
      <button class="off" aria-label="Add sub-event"><ui-icon name="addsub" size="24"></ui-icon></button>
      <button class="off" aria-label="Add local variable"><ui-icon name="addother" size="24"></ui-icon></button>
      <button aria-label="Add comment"><ui-icon name="comment" size="23"></ui-icon></button>
      <button aria-label="Add other"><ui-icon name="addcircle" size="23"></ui-icon></button>
      <div class="sep"></div>
      <button class="off" aria-label="Delete"><ui-icon name="trash" size="21"></ui-icon></button>
      <button aria-label="Undo"><ui-icon name="undo" size="21"></ui-icon></button>
      <button class="off" aria-label="Redo"><ui-icon name="redo" size="21"></ui-icon></button>
      <div class="sep"></div>
      <button aria-label="Search"><ui-icon name="search" size="21"></ui-icon></button>
    </div>
  `);

  define("event-line", `
    <style>
      :host { display: block; height: 27px; line-height: 27px; white-space: nowrap; }
      ui-icon, ::slotted(ui-icon) { margin-right: 2px; vertical-align: middle; }
      ::slotted(b) { color: #c678dd; font-weight: 700; }
      ::slotted(var) { color: #52b1bd; font-style: normal; }
      ::slotted(em) { margin-right: 2px; color: #b074f5; font-style: normal; }
      ::slotted(i) { color: #dcb76e; font-style: normal; }
      ::slotted(s) { margin: 0 2px; color: #98c379; text-decoration: none; }
      ::slotted(q) { color: #98c379; quotes: none; }
    </style>
    <ui-icon size="17"></ui-icon><slot></slot>
  `, setIcon);

  // The left gutter (tree line, tick and drag handle) is the same for groups and rows
  const GUTTER = `
    :host { display: flex; flex: none; margin-bottom: 2px; }
    .tick { flex: none; width: 13px; height: 1px; margin-top: 14px; background: #545861; }
    .handle { flex: none; width: 13px; margin-right: 1px; background: #3e4350; }
  `;

  define("event-group", `
    <style>
      ${GUTTER}
      h2 { flex: 1; margin: 0; padding: 0 7px; background: #4ab0e4; color: #fff; font-size: 21px; font-weight: 400; line-height: 43px; }
    </style>
    <div class="tick"></div><div class="handle"></div>
    <h2><slot></slot></h2>
  `);

  define("event-row", `
    <style>
      ${BUTTON_RESET}
      ${GUTTER}
      :host { font-size: 17px; }
      .cell { display: flex; flex-direction: column; align-items: flex-start; padding-left: 7px; }
      .conditions { width: 37%; border-right: 1px solid #474849; background: #3e4350; color: #d2d3d5; }
      .actions { flex: 1; min-width: 0; color: #d3d8e4; }
      .lines { padding-left: 2px; }
      button { height: 24px; line-height: 24px; color: #8f9299; }
      .actions button { color: #858993; }
    </style>
    <div class="tick"></div><div class="handle"></div>
    <div class="cell conditions">
      <div class="lines"><slot name="conditions"></slot></div>
      <button>Add condition</button>
    </div>
    <div class="cell actions">
      <div class="lines"><slot name="actions"></slot></div>
      <button>Add action</button>
    </div>
  `);

  define("event-sheet", `
    <style>
      :host { display: flex; flex: 1; min-height: 0; background: #282c34; }
      .list { display: flex; flex-direction: column; flex: 1; min-width: 0; overflow: hidden; margin: 0 13px 0 14px; padding-top: 1px;
        border-left: 1px solid #545861; }
      .scroll { display: flex; flex-direction: column; align-items: center; width: 13px; padding: 4px 0; background: #262931; }
      .arrow { border: 6px solid transparent; border-top-width: 0; border-bottom: 7px solid #85868a; }
      .arrow.down { transform: rotate(180deg); }
      .track { display: flex; flex-direction: column; flex: 1; width: 7px; }
      .before { flex: 350; }
      .thumb { flex: 298; border-radius: 4px; background: #85868a; }
      .after { flex: 98; }
    </style>
    <div class="list"><slot></slot></div>
    <div class="scroll">
      <div class="arrow"></div>
      <div class="track"><div class="before"></div><div class="thumb"></div><div class="after"></div></div>
      <div class="arrow down"></div>
    </div>
  `);

  define("task-app", `
    <style>
      ${BUTTON_RESET}
      :host { display: block; position: relative; }
      button { width: 50px; height: 50px; border: 1px solid transparent; border-radius: 6px; }
      :host([active]) button { border-color: #303030; background: #2a2a2a; }
      .badge { position: absolute; top: 4px; right: 4px; width: 20px; height: 20px; border-radius: 10px; background: #d9d9d9; color: #111;
        font-size: 13px; line-height: 20px; text-align: center; }
      .badge:empty { display: none; }
      .user { position: absolute; top: 4px; right: 3px; }
      :host([running])::after, :host([active])::after { content: ""; position: absolute; left: 21px; bottom: 1px; width: 8px; height: 4px;
        border-radius: 2px; background: #9a9a9a; }
      :host([active])::after { left: 15px; width: 20px; background: #d9d9d9; }
    </style>
    <button><ui-icon size="30"></ui-icon></button>
    <span class="badge"></span>
  `, (el, root) => {
    setIcon(el, root);
    root.querySelector("button").setAttribute("aria-label", el.getAttribute("icon"));
    root.querySelector(".badge").textContent = el.getAttribute("badge") || "";
    if (el.hasAttribute("active")) {
      root.querySelector("button").insertAdjacentHTML("afterend", '<ui-icon class="user" name="avatar" size="21"></ui-icon>');
    }
  });

  define("task-bar", `
    <style>
      ${BUTTON_RESET}
      :host { display: grid; grid-template-columns: 526px 1fr auto; align-items: center; flex: none; height: 60px; box-sizing: border-box;
        position: relative; border-top: 1px solid #434343; background: #1c1c1c; color: #fff; font-size: 14px; line-height: 20px; }
      .weather { justify-self: start; position: relative; gap: 8px; margin-left: 23px; text-align: left; }
      .weather .badge { position: absolute; top: -1px; left: 15px; width: 20px; height: 20px; border-radius: 10px; background: #ff99a4; color: #1c1c1c; text-align: center; }
      .weather small { display: block; color: #d0d0d0; font-size: 14px; }
      .apps { display: flex; align-items: center; gap: 5px; }
      .start { width: 37px; height: 50px; margin-right: 8px; }
      .search { display: flex; align-items: center; width: 275px; height: 40px; padding: 0 6px 0 14px; gap: 14px;
        border: 1px solid #4c4c4c; border-radius: 20px; background: #3a3a3a; }
      input { flex: 1; min-width: 0; padding: 0; border: 0; outline: 0; background: none; color: #fff; font: 16px "Open Sans", sans-serif; }
      input::placeholder { color: #cfcfcf; opacity: 1; }
      .night { margin-right: 14px; }
      .tray { display: flex; align-items: center; padding-right: 25px; }
      .hidden { width: 40px; height: 50px; margin-right: 10px; border-radius: 6px; background: #2b2b2b; }
      .status { display: flex; align-items: center; gap: 20px; margin-right: 14px; }
      .near { display: flex; align-items: center; gap: 10px; }
      .clock { width: 75px; text-align: right; }
      .tip { position: absolute; right: 227px; bottom: 75px; padding: 9px 14px; border: 1px solid #202124; border-radius: 6px; background: #2c2c2c;
        font-size: 14px; white-space: nowrap; }
    </style>
    <button class="weather">
      <ui-icon name="weather" size="34"></ui-icon><span class="badge">1</span>
      <span>58°F<small>Cloudy</small></span>
    </button>
    <div class="apps">
      <button class="start" aria-label="Start"><ui-icon name="windows" size="29"></ui-icon></button>
      <div class="search">
        <ui-icon name="search" size="19"></ui-icon>
        <input placeholder="Search" aria-label="Search">
        <ui-icon class="night" name="night" size="28"></ui-icon>
      </div>
      <task-app icon="explorer"></task-app>
      <task-app icon="dropbox"></task-app>
      <task-app icon="chrome"></task-app>
      <task-app icon="steam"></task-app>
      <task-app icon="minecraft"></task-app>
      <task-app icon="xbox" badge="8"></task-app>
      <task-app icon="spotify"></task-app>
      <task-app icon="nox"></task-app>
      <task-app icon="spotify" running></task-app>
      <task-app icon="chrome" active></task-app>
    </div>
    <div class="tray">
      <button class="hidden" aria-label="Show hidden icons"><ui-icon name="chevup" size="18" stroke="2.5"></ui-icon></button>
      <div class="status">
        <ui-icon name="bluetooth"></ui-icon>
        <ui-icon name="spotify"></ui-icon>
        <div class="near">
          <ui-icon name="wifi"></ui-icon>
          <ui-icon name="volume"></ui-icon>
          <ui-icon name="battery" size="25"></ui-icon>
        </div>
      </div>
      <div class="clock">11:00 PM<br>2/25/2026</div>
    </div>
    <div class="tip" role="tooltip">Show hidden icons</div>
  `);
</script>
</body>
</html>
